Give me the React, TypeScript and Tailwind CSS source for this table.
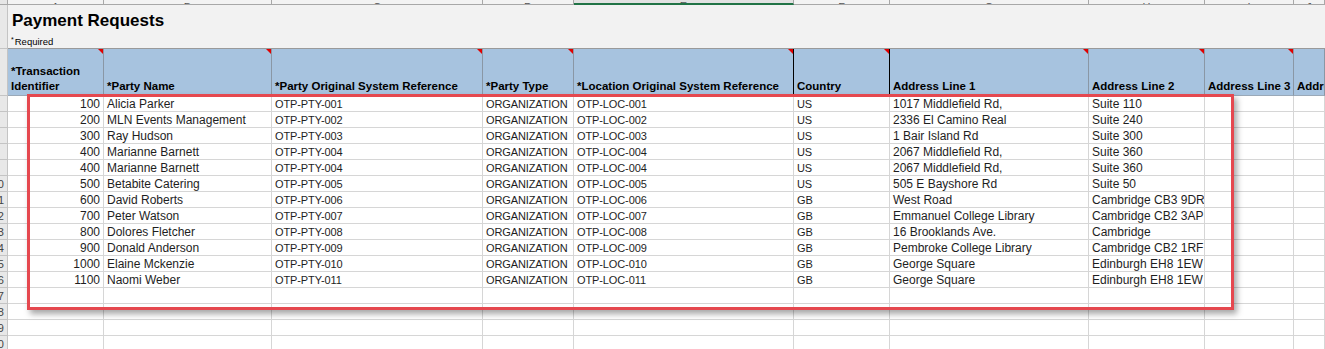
import React from "react";

// ── Sheet layout ────────────────────────────────────────────────────────────

type Col = {
  key: string;
  w: string;
  header: string;
  wrap?: boolean;
  comment?: boolean;
  dark?: boolean;
  selected?: boolean;
  align?: "right";
  caps?: boolean;
};

const COLS: Col[] = [
  { key: "A", w: "w-[96px]", header: "*Transaction Identifier", wrap: true, comment: true, align: "right" },
  { key: "B", w: "w-[168px]", header: "*Party Name", comment: true },
  { key: "C", w: "w-[211px]", header: "*Party Original System Reference", comment: true, caps: true },
  { key: "D", w: "w-[91px]", header: "*Party Type", comment: true, caps: true },
  { key: "E", w: "w-[220px]", header: "*Location Original System Reference", comment: true, dark: true, selected: true, caps: true },
  { key: "F", w: "w-[96px]", header: "Country", comment: true, dark: true, caps: true },
  { key: "G", w: "w-[199px]", header: "Address Line 1", comment: true },
  { key: "H", w: "w-[116px]", header: "Address Line 2", comment: true },
  { key: "I", w: "w-[89px]", header: "Address Line 3", comment: true },
  { key: "J", w: "w-[60px]", header: "Address Line 4" },
];

const ROWS: string[][] = [
  ["100", "Alicia Parker", "OTP-PTY-001", "ORGANIZATION", "OTP-LOC-001", "US", "1017 Middlefield Rd,", "Suite 110"],
  ["200", "MLN Events Management", "OTP-PTY-002", "ORGANIZATION", "OTP-LOC-002", "US", "2336 El Camino Real", "Suite 240"],
  ["300", "Ray Hudson", "OTP-PTY-003", "ORGANIZATION", "OTP-LOC-003", "US", "1 Bair Island Rd", "Suite 300"],
  ["400", "Marianne Barnett", "OTP-PTY-004", "ORGANIZATION", "OTP-LOC-004", "US", "2067 Middlefield Rd,", "Suite 360"],
  ["400", "Marianne Barnett", "OTP-PTY-004", "ORGANIZATION", "OTP-LOC-004", "US", "2067 Middlefield Rd,", "Suite 360"],
  ["500", "Betabite Catering", "OTP-PTY-005", "ORGANIZATION", "OTP-LOC-005", "US", "505 E Bayshore Rd", "Suite 50"],
  ["600", "David Roberts", "OTP-PTY-006", "ORGANIZATION", "OTP-LOC-006", "GB", "West Road", "Cambridge CB3 9DR"],
  ["700", "Peter Watson", "OTP-PTY-007", "ORGANIZATION", "OTP-LOC-007", "GB", "Emmanuel College Library", "Cambridge CB2 3AP"],
  ["800", "Dolores Fletcher", "OTP-PTY-008", "ORGANIZATION", "OTP-LOC-008", "GB", "16 Brooklands Ave.", "Cambridge"],
  ["900", "Donald Anderson", "OTP-PTY-009", "ORGANIZATION", "OTP-LOC-009", "GB", "Pembroke College Library", "Cambridge CB2 1RF"],
  ["1000", "Elaine Mckenzie", "OTP-PTY-010", "ORGANIZATION", "OTP-LOC-010", "GB", "George Square", "Edinburgh EH8 1EW"],
  ["1100", "Naomi Weber", "OTP-PTY-011", "ORGANIZATION", "OTP-LOC-011", "GB", "George Square", "Edinburgh EH8 1EW"],
];

const EMPTY_ROWS = 4;

// row header, cropped at the left edge: only the last digit of 2-digit numbers shows
const RowHead = ({ n, h = "h-[16px]" }: { n?: number; h?: string }) => (
  <div
    className={`${h} w-[8px] shrink-0 overflow-hidden bg-[#e8e8e8] border-r border-b border-[#c4c4c4] flex justify-end pr-[3px] pt-[1px] text-[11px] leading-[15px] text-[#444]`}
  >
    {n !== undefined && n >= 10 ? <span className="shrink-0">{n}</span> : null}
  </div>
);

const HeaderCell = ({ col, last }: { col: Col; last?: boolean }) => (
  <div
    className={`relative ${last ? "flex-1 min-w-0" : col.w} shrink-0 h-full bg-[#a7c3df] border-b border-[#9aa9b8] ${
      col.dark ? "border-r border-r-black" : "border-r border-r-[#8a97a5]"
    } flex flex-col justify-end px-[3px] pb-[1px] overflow-hidden`}
  >
    <span
      className={`text-[11.5px] leading-[15px] font-bold text-black ${
        col.wrap ? "whitespace-normal" : "whitespace-nowrap"
      }`}
    >
      {col.wrap ? (
        <>
          *Transaction
          <br />
          Identifier
        </>
      ) : (
        col.header
      )}
    </span>
    {col.comment && (
      <span className="absolute top-0 right-0 w-0 h-0 border-l-[5px] border-l-transparent border-t-[5px] border-t-[#e00000]" />
    )}
  </div>
);

const DataCell = ({ col, value, last }: { col: Col; value?: string; last?: boolean }) => (
  <div
    className={`${last ? "flex-1 min-w-0" : col.w} shrink-0 h-full border-r border-b border-[#d6d6d6] px-[3px] pt-[1px] overflow-hidden whitespace-nowrap text-[#1e1e1e] leading-[14px] ${
      col.align === "right" ? "text-right" : ""
    } ${col.caps ? "text-[11px] tracking-[-0.01em]" : "text-[12px]"}`}
  >
    {value ?? ""}
  </div>
);

const App = () => (
  <div className="relative w-[1325px] h-[349px] overflow-hidden bg-white font-['Liberation_Sans',Arial,sans-serif]">
    {/* column letter strip, mostly scrolled out of view */}
    <div className="flex h-[5px]">
      <div className="w-[8px] shrink-0 bg-[#e6e6e6] border-r border-b border-[#a8a8a8]" />
      {COLS.map((c, i) => (
        <div
          key={c.key}
          className={`${i === COLS.length - 1 ? "flex-1" : c.w} shrink-0 overflow-hidden flex items-end justify-center ${
            c.selected
              ? "bg-[#e2e2e2] border-b-2 border-b-[#217346] border-r border-r-[#a8a8a8]"
              : "bg-[#f3f3f3] border-b border-r border-[#a8a8a8]"
          }`}
        >
          <span className="text-[11px] leading-[11px] text-[#555] translate-y-[9px]">{c.key}</span>
        </div>
      ))}
    </div>

    {/* title rows */}
    <div className="flex h-[44px]">
      <RowHead h="h-[44px]" />
      <div className="flex-1 bg-[#f2f2f2] border-b border-[#9a9a9a] pl-[4px] pt-[6px]">
        <div className="text-[17px] leading-[20px] font-bold text-black">Payment Requests</div>
        <div className="mt-[5px] text-[9.5px] leading-[12px] text-black flex items-start">
          <span className="text-[7px] leading-[8px] mr-[1px] -ml-[1px]">*</span>
          Required
        </div>
      </div>
    </div>

    {/* header row */}
    <div className="flex h-[47px]">
      <RowHead h="h-[47px]" />
      {COLS.map((c, i) => (
        <HeaderCell key={c.key} col={c} last={i === COLS.length - 1} />
      ))}
    </div>

    {/* data rows */}
    {ROWS.map((r, ri) => (
      <div key={ri} className="flex h-[16px]">
        <RowHead n={ri + 5} />
        {COLS.map((c, ci) => (
          <DataCell key={c.key} col={c} value={r[ci]} last={ci === COLS.length - 1} />
        ))}
      </div>
    ))}
    {Array.from({ length: EMPTY_ROWS }).map((_, ei) => (
      <div key={`e${ei}`} className="flex h-[16px]">
        <RowHead n={ROWS.length + 5 + ei} />
        {COLS.map((c, ci) => (
          <DataCell key={c.key} col={c} last={ci === COLS.length - 1} />
        ))}
      </div>
    ))}

    {/* red highlight drawn over the sheet */}
    <div className="absolute left-[27px] top-[94px] w-[1207px] h-[216px] border-[3px] border-[#e5484f] shadow-[3px_4px_6px_rgba(0,0,0,0.35)] pointer-events-none" />
  </div>
);

export default App;
